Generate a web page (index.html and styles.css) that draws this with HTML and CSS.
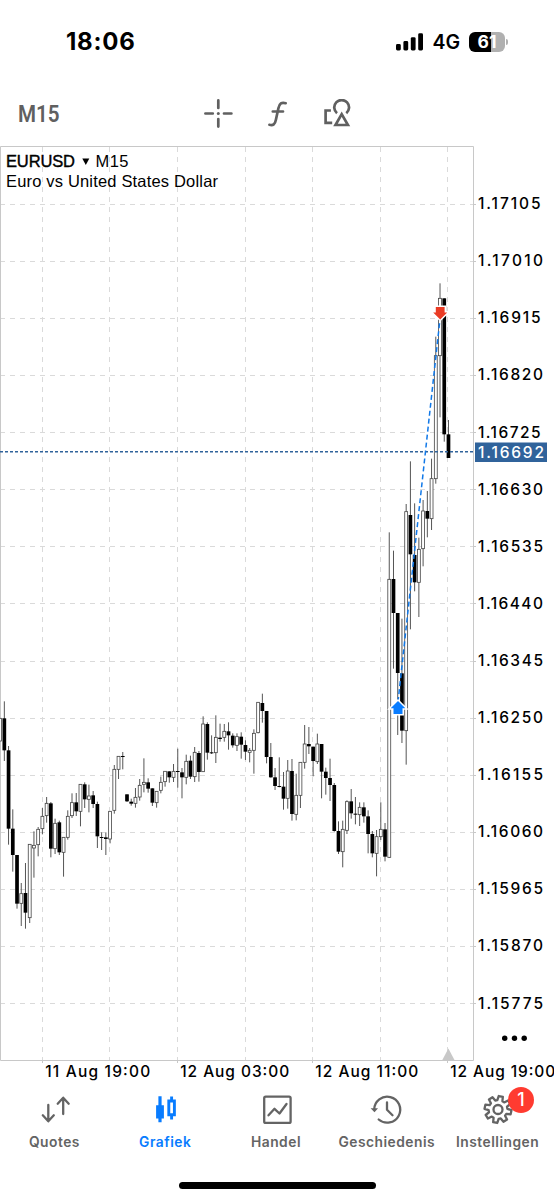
FILE: index.html
```html
<!DOCTYPE html>
<html lang="nl">
<head>
    <meta charset="UTF-8">
    <meta name="viewport" content="width=device-width, initial-scale=1.0">
    <title>EURUSD M15</title>
    <link rel="stylesheet" href="styles.css">
</head>
<body>
    <header class="status">
        <span class="clock">18:06</span>
        <div class="status-right">
            <svg class="signal" width="28" height="18" viewBox="0 0 28 18">
                <rect x="0" y="11" width="4.800" height="6.5" rx="1.4"/>
                <rect x="7.4" y="8" width="4.800" height="9.5" rx="1.4"/>
                <rect x="14.8" y="4.2" width="4.800" height="13.3" rx="1.4"/>
                <rect x="22.2" y="0.3" width="4.800" height="17.2" rx="1.4"/>
            </svg>
            <span class="network">4G</span>
            <span class="battery">61</span>
            <span class="battery-tip"></span>
        </div>
    </header>

    <nav class="toolbar">
        <span class="timeframe">M15</span>
        <svg class="tool" width="30" height="30" viewBox="0 0 30 30">
            <path d="M15.3 1.4v7.6M15.3 20v7.6M2.4 14.5h7.4M21 14.5h7.4" stroke-width="2.7" stroke-linecap="round"/>
            <circle class="dot" cx="15.3" cy="14.5" r="1.5"/>
        </svg>
        <svg class="tool" width="30" height="30" viewBox="0 0 30 30">
            <path d="M23.7 4.2c-4-1.2-6.3.2-7.3 5l-2.5 11.5c-.9 4.700-2.700 6-6.500 5.100M10.800 12.500h10.200" stroke-width="2.700" stroke-linecap="round"/>
        </svg>
        <svg class="tool" width="30" height="30" viewBox="0 0 30 30">
            <path d="M9.900 11.500h-5.300v12.400h6.600" stroke-width="2.700"/>
            <path d="M16 14.200a7.400 7.400 0 1 1 9.300 0" stroke-width="2.700"/>
            <path d="M20.700 15.200l-6.200 10.800h12.400z" stroke-width="2.700"/>
        </svg>
    </nav>

    <svg class="chart" id="chart" width="554" height="941" viewBox="0 146 554 941">
        <g id="grid"></g>
        <path class="frame" d="M.5 1060.5V146.5H473.5V1060.5z"/>
        <path class="marker" d="M442.3 1060l6.100-11.500 6.100 11.500z"/>
        <text class="symbol" x="6" y="166.500" textLength="69">EURUSD</text>
        <path d="M82.300 158.500h7l-3.500 6.500z"/>
        <text class="title" x="95.500" y="166.500" textLength="33">M15</text>
        <text class="title" x="6" y="187.300" textLength="212">Euro vs United States Dollar</text>
        <g id="candles"></g>
        <path class="price-line" d="M0 451.800H474"/>
        <path class="trade-line" d="M398 702L440 319"/>
        <path class="buy" d="M398 701l7.300 7.300h-2.800v5.700h-9v-5.700h-2.800z"/>
        <path class="sell" d="M440.200 319.500l-7-6.900h2.600v-5.600h8.800v5.600h2.600z"/>
        <g id="prices"></g>
        <rect class="price-box" x="475" y="442.500" width="72" height="19.500"/>
        <text class="axis current" x="478" y="457.700" textLength="66">1.16692</text>
        <g id="dates"></g>
        <circle cx="504.700" cy="1038.200" r="2.700"/>
        <circle cx="514.500" cy="1038.200" r="2.700"/>
        <circle cx="524.200" cy="1038.200" r="2.700"/>
    </svg>

    <nav class="tabs">
        <a class="tab">
            <svg width="34" height="34" viewBox="0 0 34 34">
                <path d="M10.300 13v15.800M4.800 23.300l5.500 6 5.500-6M25.200 22V6M19.700 11.700l5.500-6 5.500 6"/>
            </svg>
            <span>Quotes</span>
        </a>
        <a class="tab active">
            <svg width="34" height="34" viewBox="0 0 34 34">
                <path class="solid" d="M9.400 4.300h3.200v9h2.300V26.500h-2.300v3.700H9.400v-3.700H7.100V13.300h2.300z"/>
                <path d="M19.800 9h5.600v13.800h-5.600zM22.600 4.500v4M22.600 23v4.500" stroke-width="2.900"/>
            </svg>
            <span>Grafiek</span>
        </a>
        <a class="tab">
            <svg width="34" height="34" viewBox="0 0 34 34">
                <rect x="4.200" y="4.700" width="26.400" height="26.200" rx="1.500"/>
                <path d="M8.500 23.300l6-6.500 5 4.700 7-9.500"/>
            </svg>
            <span>Handel</span>
        </a>
        <a class="tab">
            <svg width="34" height="34" viewBox="0 0 34 34">
                <path d="M3.200 17.500A13 13 0 1 1 7.700 27.500M16 10.500v7.300l5.500 5.400"/>
                <path class="solid" d="M-.4 16.300h7.400l-3.500 4z"/>
            </svg>
            <span>Geschiedenis</span>
        </a>
        <a class="tab">
            <svg width="34" height="34" viewBox="0 0 34 34">
                <path id="gear"/>
                <circle cx="16" cy="17.500" r="4.500"/>
            </svg>
            <span>Instellingen</span>
            <b class="badge">1</b>
        </a>
    </nav>
    <div class="home-bar"></div>

    <script src="chart.js"></script>
</body>
</html>
```
FILE: styles.css
```css
* {
    box-sizing: border-box;
}
body {
    margin: 0;
    width: 554px;
    height: 1200px;
    overflow: hidden;
    background-color: #fff;
    color: #000;
    font-family: Inter, 'Liberation Sans', sans-serif;
}
.status {
    display: flex;
    justify-content: space-between;
    align-items: center;
    height: 83px;
    padding: 0 46px 0 66px;
}
.clock {
    font-size: 24px;
    font-weight: 700;
    letter-spacing: 0.75px;
}
.status-right {
    display: flex;
    align-items: center;
}
.network {
    margin: 1px 9px 0 8px;
    font-size: 19.5px;
    font-weight: 600;
}
.battery {
    width: 36px;
    height: 20px;
    border-radius: 6px;
    background: linear-gradient(90deg, #000 62%, #b0b0b0 62%);
    color: #fff;
    font-size: 17.5px;
    font-weight: 700;
    line-height: 20px;
    text-align: center;
}
.battery-tip {
    width: 2px;
    height: 6px;
    margin-left: 1px;
    border-radius: 0 3px 3px 0;
    background-color: #b0b0b0;
}
.toolbar {
    display: flex;
    align-items: center;
    height: 63px;
    padding: 0 0 1px 18px;
    gap: 29px;
}
.timeframe {
    width: 156px;
    color: #606060;
    font-family: Roboto, sans-serif;
    font-size: 24px;
    font-weight: 600;
    transform: scaleX(0.86);
    transform-origin: left;
}
.tool {
    fill: none;
    stroke: #606060;
}
.tool .dot {
    fill: #606060;
    stroke: none;
}
.chart {
    display: block;
}
.grid-line {
    stroke: #dadada;
    stroke-dasharray: 5 5;
}
.tick {
    stroke: #c8c8c8;
}
.frame {
    fill: none;
    stroke: #c8c8c8;
}
.marker {
    fill: #c8c8c8;
}
.symbol, .title {
    font-family: 'Liberation Sans', Arial, sans-serif;
    font-size: 16.5px;
}
.symbol {
    stroke: #000;
    stroke-width: 0.4px;
}
.axis {
    font-size: 15.5px;
    font-weight: 500;
}
.current {
    fill: #fff;
}
.price-box {
    fill: #30639b;
}
.price-line {
    stroke: #30639b;
    stroke-width: 1.5px;
    stroke-dasharray: 3 2;
}
.trade-line {
    stroke: #1078e8;
    stroke-width: 1.5px;
    stroke-dasharray: 5 3;
}
.buy, .sell {
    stroke: #fff;
    stroke-width: 3px;
    paint-order: stroke;
}
.buy {
    fill: #087cff;
}
.sell {
    fill: #ea3b24;
}
.wick {
    stroke: #555;
    stroke-width: 1px;
}
.up {
    fill: #fff;
    stroke: #444;
    stroke-width: 0.8px;
}
.down {
    fill: #000;
}
.tabs {
    display: grid;
    grid-template-columns: repeat(5, 1fr);
    height: 94px;
    padding-top: 5px;
}
.tab {
    position: relative;
    display: flex;
    flex-direction: column;
    align-items: center;
    color: #646464;
    font-size: 13.8px;
    font-weight: 600;
    letter-spacing: 0.5px;
}
.tab svg {
    overflow: visible;
    fill: none;
    stroke: currentColor;
    stroke-width: 2.3px;
    stroke-linecap: round;
    stroke-linejoin: round;
}
.tab .solid {
    fill: currentColor;
    stroke: none;
}
.tab span {
    margin: 7px 2px 0 0;
    line-height: 18px;
}
.active {
    color: #087cff;
}
.tab.active svg {
    stroke-linecap: butt;
    stroke-linejoin: miter;
}
.badge {
    position: absolute;
    top: -5px;
    right: 20px;
    width: 26px;
    height: 26px;
    border-radius: 50%;
    background-color: #ff3b30;
    color: #fff;
    font-size: 18px;
    font-weight: 500;
    line-height: 26px;
    text-align: center;
    letter-spacing: 0;
}
.home-bar {
    width: 197px;
    height: 7px;
    margin: 1px auto 0;
    border-radius: 4px;
    background-color: #000;
}
```
FILE: chart.js
```js
const NS = 'http://www.w3.org/2000/svg';

const add = (parent, tag, attrs, text) => {
    const el = document.createElementNS(NS, tag);
    for (const key in attrs) el.setAttribute(key, attrs[key]);
    if (text) el.textContent = text;
    document.getElementById(parent).appendChild(el);
};

// candles per block: [up, high, body top, body bottom, low], in thirds of a pixel from the block top
const blocks = [
    { top: 690, rows: [
        [1,85,85,153,153],[0,34,85,181,213],[0,168,181,416,464],[0,358,416,495,545],
        [0,495,495,641,656],[1,579,611,640,708],[0,519,609,668,716],[1,463,463,683,699],
        [1,424,466,474,563],[1,411,418,464,499],[1,354,379,416,433],[1,321,340,377,398],
        [0,336,340,476,502],[1,386,400,476,492],[0,392,397,487,495],[1,442,442,487,560],
        [1,361,379,442,449],[1,310,338,377,384],[0,309,337,364,378],[1,283,283,364,409],
        [0,277,283,328,354],[1,284,318,328,367],[0,303,316,342,354],[0,335,342,439,474],
        [0,427,441,443,480],[0,427,442,447,495],[1,364,364,447,460],[1,225,238,361,371],
        [1,199,199,238,267],[0,186,198,201,238],[0,313,313,334,336],[0,326,335,341,347],
        [1,294,322,340,353],[1,267,286,321,332],[1,205,277,283,307],[0,265,277,296,308],
        [0,295,295,338,348],[1,304,304,338,353],[1,260,277,301,310],[1,244,244,275,290],
        [0,244,244,262,278],[1,222,244,262,276],[0,176,243,246,293],[0,234,247,262,325],
        [1,194,214,262,283],[0,197,212,260,267],[1,171,187,260,276],[0,183,189,246,275],
        [1,79,102,245,246],[0,97,102,188,209],[0,136,187,190,192],[1,76,142,188,219],
        [0,101,143,147,155]
    ] },
    { top: 680, rows: [
        [1,132,154,172,185],[0,127,154,166,209],[0,160,167,196,203],[1,160,170,196,213],
        [0,157,170,194,236],[0,181,195,215,240],[1,204,211,217,247],[1,148,160,211,281],
        [1,67,67,158,160],[0,41,69,93,128],[0,93,93,231,250],[0,189,231,292,293],
        [0,264,292,318,330],[0,232,318,320,322],[0,276,320,356,389],[1,240,273,355,386],
        [0,237,273,402,422],[1,281,346,403,421],[1,247,247,346,384],[1,135,192,247,266],
        [0,141,192,199,222],[0,200,200,243,289],[1,161,192,245,252],[0,192,192,275,355],
        [0,263,275,294,344],[0,236,294,315,363],[0,309,315,453,455]
    ] },
    { top: 720, rows: [
        [0,304,333,395,402],[1,302,328,395,442],[1,241,245,331,342],[0,207,244,280,296],
        [0,231,281,284,313],[1,247,262,284,318],[0,247,262,289,308],[0,271,289,342,400],
        [0,333,342,400,412],[1,330,350,400,469],[1,247,328,350,360],[0,309,328,410,424]
    ] },
    { top: 500, rows: [
        [1,97,238,1072,1074],[0,152,237,339,506],[0,339,339,519,705],[0,356,520,692,729],
        [1,12,35,692,794],[0,-116,45,163,388],[0,10,165,247,274],[1,113,148,247,351],
        [1,0,33,146,199],[0,-27,33,56,112],[1,-124,-64,56,90]
    ] },
    { top: 270, rows: [
        [1,200,257,626,641],[1,40,85,257,442],[0,85,85,493,515],[0,450,493,564,564]
    ] }
];

let index = 0;
blocks.forEach(block => {
    block.rows.forEach(([up, high, top, bottom, low]) => {
        const x = 0.1 + index * 4.23;
        const y = v => block.top + v / 3;
        add('candles', 'path', { class: 'wick', d: `M${x} ${y(high)}V${y(low)}` });
        const w = up ? 2.9 : 3.7;
        add('candles', 'rect', {
            class: up ? 'up' : 'down',
            x: x - w / 2,
            y: y(top),
            width: w,
            height: Math.max(1, y(bottom) - y(top))
        });
        index++;
    });
});

for (let i = 0; i < 15; i++) {
    const y = 203.7 + i * 57.1;
    const line = Math.round(y) + 0.5;
    add('grid', 'path', { class: 'grid-line', d: `M0 ${line}H473` });
    add('grid', 'path', { class: 'tick', d: `M473 ${line}h3` });
    const price = (1.17105 - i * 0.00095).toFixed(5);
    add('prices', 'text', { class: 'axis', x: 478, y: y + 5.4, textLength: i === 0 || i === 2 || i === 4 ? 62.5 : 65 }, price);
}

const dates = ['11 Aug 19:00', '12 Aug 03:00', '12 Aug 11:00', '12 Aug 19:00'];
for (let i = 0; i < 7; i++) {
    const x = Math.floor(42.3 + i * 67.6) + 0.5;
    add('grid', 'path', { class: 'grid-line', d: `M${x} 147V1060` });
    if (i % 2 === 0) {
        add('grid', 'path', { class: 'tick', d: `M${x} 1060v3` });
        add('dates', 'text', { class: 'axis', x: x + 2.7, y: 1077, textLength: i === 2 ? 109 : i === 4 ? 103 : 105 }, dates[i / 2]);
    }
}

// gear outline: eight teeth with notches between them
const points = [];
for (let i = 0; i < 8; i++) {
    [[-16, 9.4], [-9, 13.5], [9, 13.5], [16, 9.4]].forEach(([a, r]) => {
        const t = (i * 45 + 12 + a) * Math.PI / 180;
        points.push(`${(16 + r * Math.cos(t)).toFixed(2)} ${(17.5 + r * Math.sin(t)).toFixed(2)}`);
    });
}
document.getElementById('gear').setAttribute('d', 'M' + points.join('L') + 'z');
```
